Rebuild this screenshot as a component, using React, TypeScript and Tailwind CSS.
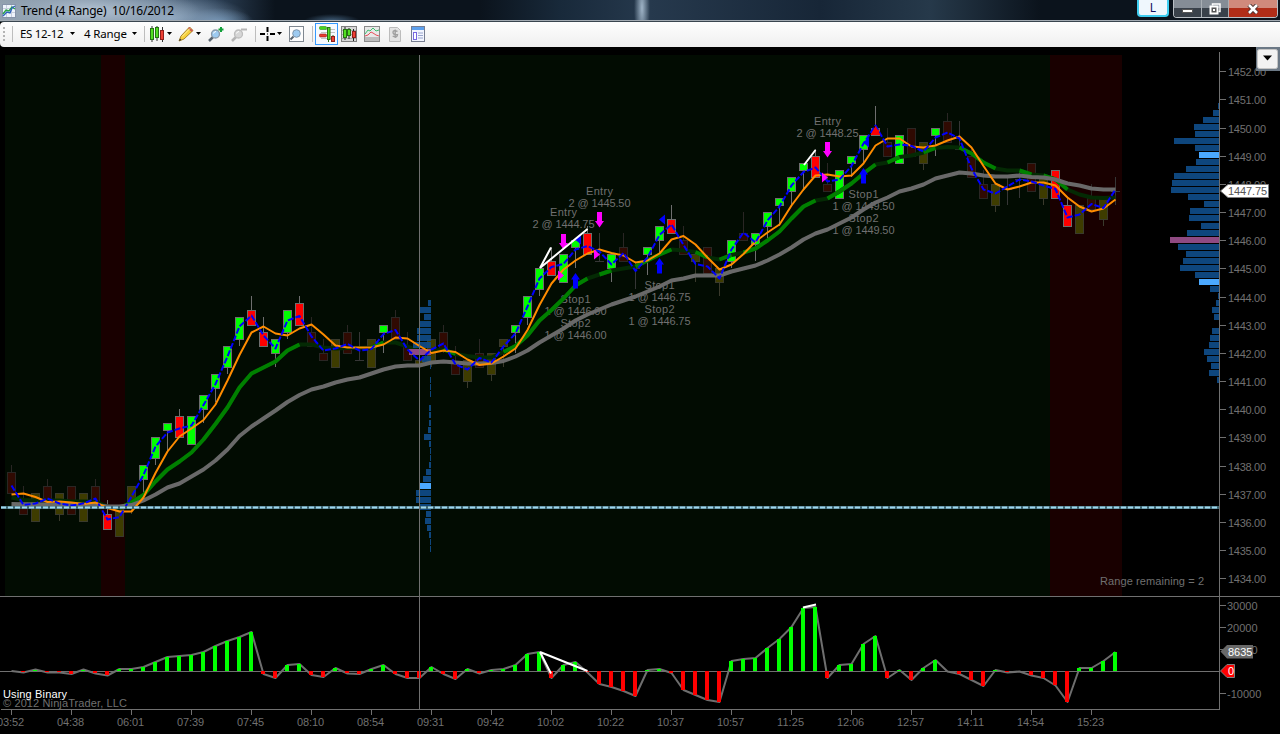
import type { ReactNode } from 'react';

type Kind = 'g' | 'r' | 'd' | 'o' | 'x';
type Candle = [Kind, number, number, number, number];

const X0 = 11;
const STEP = 12;
const bx = (i: number) => X0 + i * STEP;

// kind, body top, body bottom, high, low
const candles: Candle[] = [
  ['d', 472, 493, 465, 493], ['d', 500, 514, 486, 514], ['o', 493, 521, 493, 521], ['d', 486, 507, 479, 507],
  ['o', 493, 514, 493, 521], ['d', 486, 514, 486, 514], ['o', 493, 521, 493, 521], ['d', 486, 507, 479, 507],
  ['r', 514, 529, 500, 529], ['o', 508, 536, 508, 536], ['o', 486, 507, 486, 514], ['g', 465, 479, 465, 493],
  ['g', 437, 458, 437, 465], ['g', 423, 430, 423, 451], ['r', 416, 437, 409, 437], ['g', 416, 444, 416, 444],
  ['g', 395, 409, 395, 423], ['g', 374, 388, 374, 402], ['g', 346, 367, 346, 374], ['g', 317, 339, 317, 346],
  ['r', 310, 325, 296, 325], ['r', 332, 346, 317, 346], ['g', 339, 353, 339, 367], ['g', 310, 332, 310, 339],
  ['r', 303, 325, 296, 325], ['d', 332, 346, 317, 346], ['d', 353, 360, 339, 360], ['o', 339, 367, 339, 367],
  ['d', 332, 353, 325, 353], ['x', 360, 360, 332, 360], ['o', 339, 367, 339, 367], ['g', 325, 332, 325, 353],
  ['d', 317, 339, 310, 339], ['d', 346, 360, 332, 360], ['o', 360, 365, 339, 367], ['o', 339, 361, 339, 367],
  ['d', 332, 349, 325, 353], ['d', 361, 374, 346, 374], ['o', 360, 381, 360, 388], ['d', 353, 367, 339, 367],
  ['o', 353, 374, 353, 381], ['o', 339, 346, 339, 367], ['g', 325, 332, 325, 353], ['g', 296, 317, 296, 325],
  ['g', 268, 289, 268, 296], ['r', 261, 275, 247, 275], ['g', 254, 282, 254, 282], ['g', 240, 247, 240, 268],
  ['r', 233, 254, 226, 254], ['x', 261, 261, 233, 261], ['g', 254, 268, 254, 282], ['d', 247, 261, 233, 261],
  ['x', 268, 268, 261, 289], ['g', 247, 254, 247, 275], ['g', 226, 240, 226, 254], ['r', 219, 233, 205, 233],
  ['d', 240, 254, 226, 254], ['o', 254, 261, 254, 282], ['d', 247, 273, 247, 275], ['o', 268, 282, 268, 296],
  ['g', 240, 261, 240, 268], ['d', 233, 240, 212, 240], ['g', 233, 244, 233, 261], ['g', 212, 226, 212, 240],
  ['g', 198, 205, 198, 226], ['g', 177, 191, 177, 205], ['g', 163, 170, 163, 191], ['r', 156, 177, 149, 177],
  ['d', 184, 191, 163, 191], ['g', 170, 198, 170, 198], ['g', 156, 163, 156, 177], ['g', 135, 149, 135, 163],
  ['r', 128, 135, 106, 135], ['d', 142, 156, 128, 156], ['g', 135, 163, 135, 163], ['d', 128, 156, 128, 156],
  ['o', 142, 163, 142, 170], ['g', 128, 135, 128, 156], ['d', 121, 142, 113, 142], ['x', 149, 149, 121, 149],
  ['d', 156, 177, 149, 177], ['d', 184, 198, 170, 198], ['o', 184, 205, 184, 212], ['x', 189, 189, 177, 205],
  ['x', 179, 179, 170, 198], ['d', 163, 191, 163, 191], ['o', 177, 198, 177, 205], ['r', 170, 198, 170, 198],
  ['r', 205, 226, 198, 226], ['o', 205, 233, 205, 233], ['d', 198, 209, 184, 212], ['o', 198, 219, 198, 226],
  ['x', 191, 191, 177, 205],
];

const fast = [
  485.5, 505, 503.5, 498.5, 503.5, 505.5, 503.5, 498.5, 519.5, 517, 496.5, 475, 446.5, 432.5, 428.5, 425.5, 405, 384,
  356.5, 326.5, 315.5, 335.5, 348.5, 320.5, 316, 336.5, 350.5, 348.5, 344, 350.5, 349, 334, 330, 349.5, 360.5, 349.5,
  343.5, 364.5, 369.5, 358, 362.5, 346.5, 333.5, 306.5, 278.5, 267, 264, 249.5, 246, 251.5, 264.5, 253, 271, 257.5, 235,
  224.5, 245, 264, 266.5, 278.5, 249.5, 232.5, 242.5, 220.5, 206.5, 185.5, 172, 167.5, 181.5, 179.5, 166, 143.5, 125.5,
  146.5, 144.5, 146, 151.5, 137.5, 132.5, 138.5, 168.5, 189.5, 193.5, 186.5, 179.5, 181.5, 185.5, 189, 217.5, 214.5,
  204, 208, 189.5,
];
const mid = [
  494.5, 493.5, 497, 502, 501.5, 502.5, 504, 502.5, 508, 511.5, 511.5, 497.5, 473, 451.5, 436.5, 428.5, 420, 404.5,
  380.5, 355, 332.5, 326.5, 333.5, 335.5, 328.5, 324.5, 334.5, 345.5, 347.5, 347.5, 347.5, 344.5, 337.5, 338.5, 346,
  353, 350.5, 352, 359.5, 365, 363.5, 356.5, 348.5, 330, 305, 283.5, 269.5, 260.5, 253.5, 249.5, 253, 255.5, 262.5,
  260.5, 253.5, 239.5, 236, 244.5, 257.5, 269.5, 264.5, 254, 241.5, 232.5, 224.5, 205.5, 189.5, 175.5, 174.5, 176.5,
  175.5, 163.5, 145.5, 138.5, 138.5, 146.5, 147.5, 145.5, 140.5, 136.5, 147.5, 166, 183.5, 189.5, 186.5, 182.5, 182.5,
  185.5, 197.5, 206.5, 211.5, 208.5, 199.5,
];
const slow = [
  504, 504.2, 504.3, 504.4, 504.5, 504.6, 504.7, 505, 506.5, 506.5, 505, 500.5, 494.5, 487.5, 483.5, 476.5, 469.5, 460.5,
  449.5, 436, 426.5, 418.5, 410.5, 402, 395, 389.5, 386.5, 382.5, 379.5, 377.5, 373.5, 369.5, 366.5, 365.5, 365.5,
  362.5, 361.5, 362.5, 363.5, 363.5, 363, 361, 356.5, 350.5, 342.5, 335.5, 328.5, 320.5, 314.5, 309.5, 304.5, 300.5,
  296.5, 291.5, 286.5, 280.5, 278.5, 275.5, 275.5, 275.5, 271.5, 268.5, 265.5, 260.5, 254.5, 247.5, 239.5, 233.5,
  229.5, 223.5, 217.5, 209.5, 202.5, 197.5, 191.5, 188.5, 184.5, 178.5, 175.5, 172.5, 173.5, 175.5, 176.5, 176.5,
  175.5, 177, 177.5, 179.5, 183.5, 185.5, 188.5, 189.5, 189.5,
];
const trend = [
  497.5, 500, 500.5, 500.5, 500.5, 501.5, 501.5, 501.5, 506.5, 508, 502.5, 495, 481.5, 469.5, 461.5, 452.5, 439.5, 424,
  407.5, 387.5, 373.5, 367.5, 361.5, 350.5, 344.5, 344.5, 347.5, 348.5, 348, 348, 347.5, 342.5, 342.5, 346.5, 351, 351,
  349.5, 354, 356, 357.5, 357.5, 352, 346, 335.5, 320.5, 310, 298.5, 285.5, 278.5, 274.5, 270.5, 268.5, 266.5, 260.5,
  254.5, 249.5, 250.5, 252, 257.5, 259.5, 255, 252.5, 248.5, 240.5, 231.5, 218.5, 206.5, 200.5, 198.5, 191.5, 183.5,
  173.5, 164.5, 162.5, 157, 155.5, 152.5, 148, 147, 147.5, 153.5, 162.5, 168.5, 170.5, 170.5, 174.5, 175.5, 179.5,
  189.5, 194.5, 197.5, 198, 197.5,
];
// inclusive index ranges in which the trend line is lit
const lit: [number, number][] = [
  [9, 24], [30, 31], [36, 37], [41, 48], [49, 50], [52, 55], [57, 58], [59, 60], [61, 67], [68, 72], [73, 74], [76, 77],
  [79, 82], [84, 85], [86, 88],
];

const hist = [
  671, 672.5, 669.5, 672.5, 672.5, 674, 669.5, 673.5, 675.5, 669, 669, 667, 662, 657, 656, 655, 652, 646, 641, 637, 632,
  674, 678, 665, 664, 675, 677, 668, 673.5, 674, 669, 665, 674, 678, 678, 667, 674, 679, 669, 673.5, 670, 669, 665, 654,
  652, 678, 665, 662, 672.5, 684, 687, 691, 696, 670, 669, 673, 690, 695, 700, 702, 661, 659, 658, 648, 639, 627, 608,
  607, 678, 665, 664, 644, 636, 678, 670, 680, 668, 660, 671.5, 674, 680, 686, 670, 672.5, 671.5, 675.5, 678, 685.5,
  702, 668, 668, 661, 652,
];

const rightProfile = [
  1, 6, 16, 25, 24, 45, 24, 20, 23, 33, 45, 47, 48, 31, 15, 29, 30, 18, 32, 49, 41, 33, 36, 39, 24, 20, 9, 1, 3, 7, 5, 0,
  7, 9, 10, 15, 12, 8, 10, 2,
];
const leftProfile = [
  3, 11, 7, 11, 14, 14, 18, 22, 9, 1, 0, 1, 1, 1, 0, 2, 2, 2, 3, 7, 2, 1, 1, 2, 5, 8, 11, 15, 15, 11, 5, 6, 4, 2, 1, 1,
];

const times = [
  '03:52', '04:38', '06:01', '07:39', '07:45', '08:10', '08:54', '09:31', '09:42', '10:02', '10:22', '10:37', '10:57',
  '11:25', '12:06', '12:57', '14:11', '14:54', '15:23',
];

const pts = (a: number[], from = 0, to = a.length - 1) =>
  a.slice(from, to + 1).map((y, k) => `${bx(from + k) + 0.5},${y}`).join(' ');

const fills: Record<Kind, string> = { g: '#00ff00', r: '#ff0000', d: '#300a02', o: '#3e3c00', x: 'none' };
const edges: Record<Kind, string> = { g: '#6e6e6e', r: '#6e6e6e', d: '#2a2624', o: '#3a3a2c', x: '#363636' };

function CandleShape({ i, c }: { i: number; c: Candle }) {
  const [k, t, b, h, l] = c;
  const x = bx(i);
  if (k === 'x')
    return (
      <g fill={edges.x}>
        <rect x={x} y={h} width="1" height={l - h} />
        <rect x={x - 4} y={t} width="9" height="1" />
      </g>
    );
  return (
    <g>
      {h < t && <rect x={x} y={h} width="1" height={t - h} fill={edges[k]} />}
      {l > b && <rect x={x} y={b} width="1" height={l - b} fill={edges[k]} />}
      <rect x={x - 3.5} y={t + 0.5} width="8" height={b - t} fill={fills[k]} stroke={edges[k]} />
    </g>
  );
}

function Profile({ rows, right, top, value, edge }: { rows: number[]; right: number; top: number; value: number; edge: number[] }) {
  return (
    <g shapeRendering="crispEdges">
      {rows.map((w, k) =>
        w ? (
          <rect
            key={k}
            x={right - w}
            y={Math.round(top + k * 7.03)}
            width={w}
            height="6"
            fill={k === value ? '#8f4a82' : edge.includes(k) ? '#4ba9ff' : '#0f4a84'}
            fillOpacity={k === value || edge.includes(k) ? 1 : 0.95}
          />
        ) : null,
      )}
    </g>
  );
}

const sells: [number, number][] = [[563, 234], [599, 212], [827, 142]];
const buys: [number, number][] = [[575, 274], [659, 259], [863, 169]];
const sellMarks: [number, number][] = [[558, 271], [594, 250], [822, 173]];
const buyMarks: [number, number][] = [[575, 235], [659, 215], [863, 138]];

const notes: [number, number, string[]][] = [
  [563, 216, ['Entry', '2 @ 1444.75']],
  [599, 195, ['Entry', '2 @ 1445.50']],
  [827, 125, ['Entry', '2 @ 1448.25']],
  [575, 303, ['Stop1', '1 @ 1446.00', 'Stop2', '1 @ 1446.00']],
  [659, 289, ['Stop1', '1 @ 1446.75', 'Stop2', '1 @ 1446.75']],
  [863, 198, ['Stop1', '1 @ 1449.50', 'Stop2', '1 @ 1449.50']],
];

function Chart() {
  return (
    <svg
      viewBox="0 47 1280 687"
      className="block h-[687px] w-[1280px] bg-black font-['Liberation_Sans',Arial,sans-serif] text-[11px]"
    >
      <g shapeRendering="crispEdges">
        <rect x="5" y="55" width="1117" height="541" fill="#020c02" />
        <rect x="101" y="55" width="24" height="541" fill="#190000" />
        <rect x="1050" y="55" width="72" height="541" fill="#190000" />
      </g>

      <g fill="#707070" textAnchor="middle">
        {notes.map(([x, y, lines]) =>
          lines.map((s, k) => (
            <text key={`${x}-${k}`} x={x + 0.5} y={y + k * 12} textLength={s.length > 5 ? 62 : s === 'Entry' ? 27 : 30}>
              {s}
            </text>
          )),
        )}
      </g>

      <g shapeRendering="crispEdges">
        {candles.map((c, i) => (
          <CandleShape key={i} i={i} c={c} />
        ))}
      </g>

      <g fill="none" strokeLinejoin="round">
        <polyline points={pts(trend)} stroke="#042a04" strokeWidth="4" />
        {lit.map(([a, b]) => (
          <polyline key={a} points={pts(trend, a, b)} stroke="#008000" strokeWidth="4" />
        ))}
      </g>

      <Profile rows={leftProfile} right={431} top={300} value={7} edge={[26]} />
      <Profile rows={rightProfile} right={1219} top={103} value={19} edge={[7, 25]} />

      <g fill="none" strokeLinejoin="round">
        <polyline points={pts(slow)} stroke="#696969" strokeWidth="4" />
        <polyline points={pts(mid)} stroke="#ff8c00" strokeWidth="2" />
        <polyline points={pts(fast)} stroke="#0000ff" strokeWidth="2" strokeDasharray="6 2" />
      </g>

      <path d="M1 507.5H1219" stroke="#3f6672" strokeWidth="3" />
      <path d="M1 507.5H1219" stroke="#9fd8ee" strokeWidth="2" strokeDasharray="5 2" />

      {sells.map(([x, y]) => (
        <path key={x} d={`M${x - 2} ${y}h5v9h2l-4.5 6.5l-4.5 -6.5h2z`} fill="#ff00ff" />
      ))}
      {buys.map(([x, y]) => (
        <path key={x} d={`M${x + 0.5} ${y - 1}l4.5 6.5h-2v9h-5v-9h-2z`} fill="#0000ff" />
      ))}
      {sellMarks.map(([x, y]) => (
        <path key={x} d={`M${x} ${y - 0.5}l6 5l-6 5z`} fill="#ff00ff" />
      ))}
      {buyMarks.map(([x, y]) => (
        <path key={x} d={`M${x + 6} ${y - 0.5}l-6 5l6 5z`} fill="#0000ff" />
      ))}
      <path d="M875.5 126l5 9h-10z" fill="#ff0000" />
      <g stroke="#ffffff" strokeWidth="2" fill="none">
        <path d="M551 247.500L540 268L587.500 229M804 165L815.500 150" />
      </g>

      <g fill="none" strokeLinejoin="round">
        <polyline points={hist.map((y, i) => `${bx(i) + 0.5},${y}`).join(' ')} stroke="#6e6e6e" strokeWidth="2" />
      </g>
      <g shapeRendering="crispEdges">
        <rect x="0" y="671" width="1219" height="1" fill="#707070" />
        {hist.map((y, i) =>
          y < 671 ? (
            <rect key={i} x={bx(i) - 2} y={Math.round(y)} width="4" height={671 - Math.round(y)} fill="#00ff00" />
          ) : y > 672 ? (
            <rect key={i} x={bx(i) - 2} y="671" width="4" height={Math.max(1, Math.floor(y) - 671)} fill="#ff0000" />
          ) : null,
        )}
      </g>
      <path d="M540 652L551 673.500M540 652L587.500 671M803 607.500L816 604.500" stroke="#ffffff" strokeWidth="2" />

      <g shapeRendering="crispEdges" fill="#707070">
        <rect x="419" y="55" width="1" height="654" />
        <rect x="0" y="596" width="1280" height="1" />
        <rect x="1" y="709" width="1219" height="1" />
        <rect x="1219" y="52" width="1" height="658" />
      </g>
      <g fill="#707070">
        {Array.from({ length: 19 }, (_, k) => {
          const y = Math.round(72.2 + k * 28.17);
          return (
            <g key={k}>
              <rect x="1220" y={y - 1} width="6" height="1" />
              <text x="1228" y={y + 4} textLength="38">
                {(1452 - k).toFixed(2)}
              </text>
            </g>
          );
        })}
        {[30000, 20000, 10000, -10000].map((v) => {
          const y = Math.round(672 - v * 0.0022);
          return (
            <g key={v}>
              <rect x="1220" y={y - 1} width="6" height="1" />
              <text x="1227" y={y + 4}>
                {v}
              </text>
            </g>
          );
        })}
        {times.map((t, k) => (
          <g key={t}>
            <rect x={11 + k * 60} y="710" width="1" height="5" />
            <text x={10.5 + k * 60} y="726" textAnchor="middle" textLength="27">
              {t}
            </text>
          </g>
        ))}
        <text x="1100" y="585" textLength="104">
          Range remaining = 2
        </text>
        <text x="3" y="707" textLength="124">
          © 2012 NinjaTrader, LLC
        </text>
      </g>
      <text x="3" y="698" fill="#ffffff" textLength="64">
        Using Binary
      </text>

      <path d="M1220.500 191L1228 184.500H1268.500V197.500H1228z" fill="#ffffff" stroke="#808080" />
      <text x="1228" y="195" fill="#555555" textLength="39">
        1447.75
      </text>
      <path d="M1220.500 651.500L1227 645H1253V658.500H1227z" fill="#696969" />
      <text x="1228" y="656" fill="#ffffff">
        8635
      </text>
      <path d="M1220.500 671L1227 664.500H1234.500V677.500H1227z" fill="#ff0000" stroke="#808080" />
      <text x="1228" y="675" fill="#ffffff">
        0
      </text>

      <rect x="1256" y="47" width="24" height="24" fill="#6b7885" />
      <rect x="1257.500" y="49.500" width="20" height="19" rx="2" fill="#f2f2f2" stroke="#c4c4c4" />
      <path d="M1263 55.500h9l-4.500 5z" fill="#000000" />
    </svg>
  );
}

function Glyph({ children, w = 16 }: { children: ReactNode; w?: number }) {
  return (
    <svg viewBox={`0 0 ${w} 16`} width={w} height="16" className="shrink-0">
      {children}
    </svg>
  );
}

const Caret = ({ className }: { className: string }) => (
  <svg viewBox="0 0 5 3" width="5" height="3" className={`shrink-0 ${className}`}>
    <path d="M0 0h5L2.500 3z" fill="#000" />
  </svg>
);

const Divider = ({ className }: { className: string }) => <div className={`h-4 w-px shrink-0 bg-[#bdbdbd] ${className}`} />;

function Magnifier({ sign, dim }: { sign?: '+' | '-'; dim?: boolean }) {
  return (
    <Glyph>
      <path d="M1 15l4-4" stroke={dim ? '#b5b5b5' : '#58646f'} strokeWidth="2.500" />
      <circle cx="7.500" cy="8" r="4" fill={dim ? '#d6d6d6' : '#9dcaf0'} stroke={dim ? '#bdbdbd' : '#8b9aa9'} strokeWidth="1.300" />
      <path d="M5.500 7.500q.5-2 2.500-2" stroke="#fff" fill="none" />
      {sign === '+' && <path d="M13 1v5M10.500 3.500h5" stroke="#12a03a" strokeWidth="2" />}
      {sign === '-' && <path d="M10 3.500h6" stroke="#b5b5b5" strokeWidth="2" />}
    </Glyph>
  );
}

function Toolbar() {
  return (
    <div className="flex h-[25px] w-full items-center overflow-hidden rounded-l bg-linear-to-b from-[#fefefe] to-[#efefef] pb-[2px] font-['Noto_Sans',sans-serif] text-[12px] text-black">
      <svg viewBox="0 0 2 16" width="2" height="16" className="ml-[3px] shrink-0">
        <path d="M1 1v14" stroke="#b4b4b4" strokeWidth="2" strokeDasharray="2 2" />
      </svg>
      <Divider className="ml-[7px]" />
      <span className="ml-[7px] w-[46px] shrink-0 text-[11.500px] tracking-[-0.300px] whitespace-nowrap">ES 12-12</span>
      <Caret className="ml-[4px]" />
      <span className="ml-[9px] w-[44px] shrink-0 text-[11.500px] tracking-[-0.150px] whitespace-nowrap">4 Range</span>
      <Caret className="ml-[4px]" />
      <Divider className="ml-[7px]" />
      <div className="ml-[4px] flex shrink-0">
        <Glyph>
          <path d="M3 0v16M8 0v15M13.500 1v15" stroke="#333" />
          <rect x="1.500" y="2.500" width="3" height="11" fill="#53df22" stroke="#267313" />
          <rect x="6.500" y="1.500" width="3" height="10" fill="#53df22" stroke="#267313" />
          <rect x="11.500" y="4.500" width="3" height="9" fill="#ef4034" stroke="#8f1f1b" />
        </Glyph>
      </div>
      <Caret className="ml-[2px]" />
      <div className="ml-[6px] flex shrink-0">
        <Glyph>
          <path d="M1 15l2-5 8.500-9 3.500 3.500-9 8.500z" fill="#f6d03c" stroke="#a8842a" />
          <path d="M10 2.500l1.500-1.500 3.500 3.500-1.500 1.500z" fill="#c95f53" />
          <path d="M4 10.500l8-8" stroke="#fff2a0" />
          <path d="M1 15l1-2.500L3.500 14z" fill="#333" />
        </Glyph>
      </div>
      <Caret className="ml-[2px]" />
      <div className="ml-[7px] flex shrink-0 gap-[7px]">
        <Magnifier sign="+" />
        <Magnifier sign="-" dim />
      </div>
      <Divider className="ml-[8px]" />
      <div className="ml-[4px] flex shrink-0">
        <Glyph>
          <path d="M7.500 1v5M7.500 10v5M0 8h5M10 8h5" stroke="#000" strokeWidth="2" />
          <path d="M7 8h1" stroke="#000" />
        </Glyph>
      </div>
      <Caret className="ml-[1px]" />
      <div className="ml-[6px] flex shrink-0">
        <Glyph>
          <rect x="1.500" y=".5" width="14" height="15" fill="#fdfdfd" stroke="#7f8790" />
          <path d="M2.500 13.500l3-3" stroke="#58646f" strokeWidth="2" />
          <circle cx="8.500" cy="7.500" r="3.800" fill="#9dcaf0" stroke="#7e95ab" />
        </Glyph>
      </div>
      <Divider className="ml-[8px]" />
      <div className="ml-[2px] flex h-[22px] w-[23px] shrink-0 items-center justify-center border border-[#3399ff] bg-[#f6faff]">
        <Glyph>
          <path d="M6 3.500h10M2 6.500h14M2 12.500h14" stroke="#c2c2c2" />
          <path d="M9.500 2v14M14 9v7" stroke="#267313" />
          <rect x=".5" y=".5" width="7" height="3" rx="1" fill="#46d51c" stroke="#2c8d1a" strokeWidth=".6" />
          <rect x=".5" y="8" width="7" height="3" rx="1" fill="#e93b30" stroke="#8f1f1b" strokeWidth=".6" />
          <rect x="8.500" y="1.500" width="2.500" height="12" fill="#53df22" stroke="#267313" />
          <rect x="12.500" y="10.500" width="3" height="5" fill="#ef4034" stroke="#8f1f1b" />
        </Glyph>
      </div>
      <div className="ml-[3px] flex shrink-0 gap-[7px]">
        <Glyph>
          <rect x=".5" y=".5" width="15" height="15" fill="#d7d7d7" stroke="#808080" />
          <path d="M1 4.500h14M1 8.500h14M1 12.500h14" stroke="#aaa" />
          <path d="M4 1v13M8 2v11M12.500 3v12" stroke="#222" />
          <rect x="2.500" y="3.500" width="3" height="8" fill="#53df22" stroke="#267313" />
          <rect x="6.500" y="3.500" width="3" height="6" fill="#53df22" stroke="#267313" />
          <rect x="11.500" y="5.500" width="3" height="6" fill="#ef4034" stroke="#8f1f1b" />
        </Glyph>
        <Glyph>
          <rect x=".5" y=".5" width="15" height="15" fill="#e8e8e8" stroke="#8a8a8a" />
          <rect x="1" y="11" width="14" height="4" fill="#bcbcbc" />
          <path d="M1 8l3-4 2 1 3-3 3 3 3-1" stroke="#3fbf70" fill="none" />
          <path d="M1 10l3-1 3-3 2 1 3 2 3 1" stroke="#e8505b" fill="none" />
        </Glyph>
        <Glyph>
          <path d="M2.500 1.500h8l3 3v11h-11z" fill="#e4e4e4" stroke="#bcbcbc" />
          <path d="M10.500 5.500q-4.500-2-4.500.8t4.500 2.300q0 3.500-4.800 1.500M8.200 3.500v8.500" fill="none" stroke="#a0a0a0" strokeWidth="1.400" />
        </Glyph>
        <Glyph>
          <rect x="1.500" y=".5" width="13" height="15" fill="#f2f5ff" stroke="#777e91" />
          <rect x="2" y="1" width="12" height="3" fill="#5da0ed" />
          <rect x="3.500" y="6.500" width="3" height="7" fill="#fff" stroke="#7768e0" />
          <path d="M8 7h5M8 9.500h5M8 12h5" stroke="#9aa6cc" />
        </Glyph>
      </div>
    </div>
  );
}

function TitleBar() {
  return (
    <div className="flex h-[21px] w-full shrink-0 items-start overflow-hidden border-b border-[#a3abb3] bg-[#0b131c] bg-[radial-gradient(ellipse_110px_26px_at_90px_11px,#b4c4d4_0%,#a4b5c5b0_45%,#8799aa00_100%),radial-gradient(ellipse_80px_24px_at_170px_18px,#8ca5bf_0%,#8ca5bf00_100%),radial-gradient(ellipse_36px_14px_at_218px_22px,#6c90b3_0%,#6c90b300_100%),radial-gradient(ellipse_28px_7px_at_332px_21px,#42607c_0%,#42607c00_100%),radial-gradient(ellipse_8px_40px_at_642px_8px,#9fb4c7_0%,#9fb4c700_100%),linear-gradient(90deg,#8f9dab_0px,#5b7087_130px,#2c4056_215px,#0b131c_275px,#0b131c_480px,#18293a_560px,#26394d_650px,#172637_820px,#26394a_930px,#0b131c_1040px)]">
      <svg viewBox="0 0 14 14" width="14" height="14" className="mt-[4px] ml-[2px] shrink-0">
        <rect x=".5" y=".5" width="13" height="13" fill="#eef3fb" stroke="#8794aa" />
        <path d="M1 4.500h12M1 8.500h12M4.500 1v12M9.500 1v12" stroke="#c6cedd" />
        <path d="M1 10l3-4 3 1 3-4 3 2" fill="none" stroke="#29a545" strokeWidth="1.400" />
        <path d="M1 12l4-4 3 1 2-5 3-2" fill="none" stroke="#2e62bd" strokeWidth="1.400" />
      </svg>
      <span className="mt-[3px] ml-[5px] font-['Noto_Sans',sans-serif] text-[12px] leading-[16px] tracking-[-0.210px] whitespace-pre text-black">
        {'Trend (4 Range)  10/16/2012'}
      </span>
      <div className="mr-[4px] ml-auto flex h-[17px] w-[32px] shrink-0 items-center justify-center rounded-b-sm border-2 border-t-0 border-[#3fcdf0] bg-[#eff7fd] font-['Noto_Sans',sans-serif] text-[12px] text-[#101060]">
        L
      </div>
      <div className="mr-[2px] flex h-[18px] w-[105px] shrink-0 overflow-hidden rounded-b border border-t-0 border-[#b8bec4]">
        <div className="flex w-[28px] items-center justify-center border-r border-[#a8aeb4] bg-linear-to-b from-[#858d96] from-45% to-[#39414a] to-50%">
          <div className="mt-[4px] h-[4px] w-[11px] border border-[#555] bg-white" />
        </div>
        <div className="flex w-[27px] items-center justify-center border-r border-[#a8aeb4] bg-linear-to-b from-[#858d96] from-45% to-[#39414a] to-50%">
          <svg viewBox="0 0 12 12" width="12" height="12">
            <path d="M3.500 2.500v-1.500h7.500v7.500h-1.500" fill="none" stroke="#fff" strokeWidth="1.500" />
            <rect x="1.500" y="3.500" width="7" height="7" fill="#555" stroke="#fff" strokeWidth="2" />
            <rect x="4" y="6" width="2" height="2" fill="#fff" />
          </svg>
        </div>
        <div className="flex flex-1 items-center justify-center bg-linear-to-b from-[#d08a7c] from-45% to-[#b02d18] to-50%">
          <svg viewBox="0 0 12 10" width="12" height="10">
            <path d="M2 1l8 8M10 1L2 9" stroke="#4d3533" strokeWidth="4.500" />
            <path d="M2 1l8 8M10 1L2 9" stroke="#fff" strokeWidth="2.500" />
          </svg>
        </div>
      </div>
    </div>
  );
}

export default function App() {
  return (
    <div className="flex h-[734px] w-[1280px] flex-col overflow-hidden bg-black">
      <TitleBar />
      <div className="h-px w-full shrink-0 bg-[#3a4650]" />
      <Toolbar />
      <Chart />
    </div>
  );
}
